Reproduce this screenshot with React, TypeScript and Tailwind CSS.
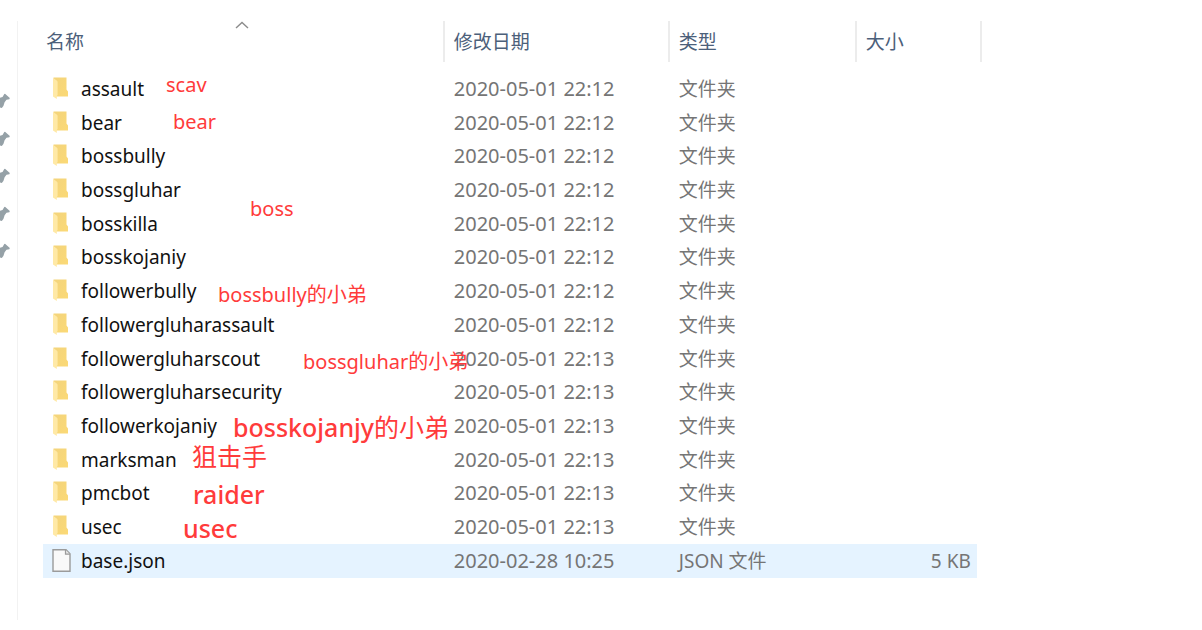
type FileRow = {
  name: string;
  modified: string;
  kind: "folder" | "file";
  size?: string;
};

type Note = {
  latin?: string;
  cjk?: string;
  className: string;
};

const files: FileRow[] = [
  { name: "assault", modified: "2020-05-01 22:12", kind: "folder" },
  { name: "bear", modified: "2020-05-01 22:12", kind: "folder" },
  { name: "bossbully", modified: "2020-05-01 22:12", kind: "folder" },
  { name: "bossgluhar", modified: "2020-05-01 22:12", kind: "folder" },
  { name: "bosskilla", modified: "2020-05-01 22:12", kind: "folder" },
  { name: "bosskojaniy", modified: "2020-05-01 22:12", kind: "folder" },
  { name: "followerbully", modified: "2020-05-01 22:12", kind: "folder" },
  { name: "followergluharassault", modified: "2020-05-01 22:12", kind: "folder" },
  { name: "followergluharscout", modified: "2020-05-01 22:13", kind: "folder" },
  { name: "followergluharsecurity", modified: "2020-05-01 22:13", kind: "folder" },
  { name: "followerkojaniy", modified: "2020-05-01 22:13", kind: "folder" },
  { name: "marksman", modified: "2020-05-01 22:13", kind: "folder" },
  { name: "pmcbot", modified: "2020-05-01 22:13", kind: "folder" },
  { name: "usec", modified: "2020-05-01 22:13", kind: "folder" },
  { name: "base.json", modified: "2020-02-28 10:25", kind: "file", size: "5 KB" },
];

const notes: Note[] = [
  { latin: "scav", className: "left-[123px] top-[52px] text-[20px]" },
  { latin: "bear", className: "left-[130px] top-[89px] text-[20px]" },
  { latin: "boss", className: "left-[207px] top-[176px] text-[20px]" },
  { latin: "bossbully", cjk: "的小弟", className: "left-[175px] top-[262px] text-[20px]" },
  { latin: "bossgluhar", cjk: "的小弟", className: "left-[260px] top-[329px] text-[20px]" },
  { latin: "bosskojanjy", cjk: "的小弟", className: "left-[190px] top-[394px] text-[25px] font-medium" },
  { cjk: "狙击手", className: "left-[149px] top-[423px] text-[25px]" },
  { latin: "raider", className: "left-[150px] top-[461px] text-[25px] font-medium" },
  { latin: "usec", className: "left-[140px] top-[495px] text-[25px] font-medium" },
];

function PinIcon() {
  return (
    <svg width="10" height="16" viewBox="0 0 10 16" className="block">
      <path d="M0 4.8 2.5 4 4.3 1 5 .8 9.8 5 9.4 6.3 6.5 6.8 4.6 9.2 3.4 13 1.8 15 0 14.5Z" fill="#95a1a7" />
    </svg>
  );
}

function FolderIcon() {
  return (
    <svg width="18" height="24" viewBox="0 0 18 24" className="block shrink-0">
      <defs>
        <linearGradient id="folderBack" x1="0" y1="0" x2="1" y2="1">
          <stop offset="0" stopColor="#f3d47c" />
          <stop offset="1" stopColor="#fbd976" />
        </linearGradient>
      </defs>
      <path d="M1.5 .5H14.5V12.5L16 14.5V19.5H3Z" fill="url(#folderBack)" />
      <path d="M1 .7 5 3.7 5.6 4.7V18L4.8 19V22L1 19.5Z" fill="#ffe9a6" />
    </svg>
  );
}

function FileIcon() {
  return (
    <svg width="20" height="24" viewBox="0 0 20 24" className="block shrink-0">
      <path d="M1 .7H14L18 4.9V22.3H1Z" fill="#f9f9f9" stroke="#9b9b9b" strokeWidth="1.4" />
      <path d="M13.5 .7V5.2H18" fill="#e6e6e6" stroke="#9b9b9b" strokeWidth="1.2" />
    </svg>
  );
}

function ColumnHeader({ label, sorted }: { label: string; sorted?: boolean }) {
  return (
    <th scope="col" className="relative h-[41px] border-r-2 border-[#ececec] p-0 text-left font-normal">
      {sorted && (
        <svg width="14" height="8" viewBox="0 0 14 8" className="absolute left-[48%] top-0">
          <path d="M1 7 7 1.5 13 7" fill="none" stroke="#8c8c8c" strokeWidth="1.4" />
        </svg>
      )}
      <button
        type="button"
        className={`block h-[41px] w-full pt-0.5 text-left text-[19px] text-[#4c607a] ${sorted ? "pl-[3px]" : "pl-[9px]"}`}
      >
        {label}
      </button>
    </th>
  );
}

export default function App() {
  return (
    <div className="flex min-h-screen bg-white pt-[21px] pb-[10px] font-['Noto_Sans','Noto_Sans_CJK_SC',sans-serif]">
      <aside className="w-[18px] border-r border-[#f2f2f2] pt-[72px]">
        <ul className="flex h-[166px] flex-col justify-between">
          {[0, 1, 2, 3, 4].map((pin) => (
            <li key={pin}>
              <PinIcon />
            </li>
          ))}
        </ul>
      </aside>

      <main className="flex-1 pl-[25px]">
        <div className="relative">
          <table className="h-[557px] w-[81%] table-fixed border-separate border-spacing-0 whitespace-nowrap">
            <colgroup>
              <col />
              <col className="w-[225px]" />
              <col className="w-[187px]" />
              <col className="w-[125px]" />
            </colgroup>
            <thead>
              <tr>
                <ColumnHeader label="名称" sorted />
                <ColumnHeader label="修改日期" />
                <ColumnHeader label="类型" />
                <ColumnHeader label="大小" />
              </tr>
            </thead>
            <tbody className="text-[20px] leading-6 text-[#757575]">
              <tr aria-hidden="true">
                <td colSpan={4} className="h-[10px] p-0" />
              </tr>
              {files.map(({ name, modified, kind, size }) => (
                <tr key={name} className={kind === "file" ? "[&>td]:bg-[#e5f3ff]" : ""}>
                  <td className="p-0 pl-[9px]">
                    <div className="flex items-center text-[19px] text-[#111111]">
                      <span className="w-[29px]">{kind === "folder" ? <FolderIcon /> : <FileIcon />}</span>
                      {name}
                    </div>
                  </td>
                  <td className="p-0 pl-[9px]">{modified}</td>
                  <td className="p-0 pl-[9px] text-[19px]">{kind === "folder" ? "文件夹" : "JSON 文件"}</td>
                  <td className="border-r-[5px] border-transparent bg-clip-padding p-0 pr-1.5 text-right text-[19px]">
                    {size}
                  </td>
                </tr>
              ))}
            </tbody>
          </table>

          {notes.map(({ latin, cjk, className }) => (
            <span key={className} className={`absolute leading-6 whitespace-nowrap text-[#ff3b3b] ${className}`}>
              {latin}
              {cjk && <span className="font-normal">{cjk}</span>}
            </span>
          ))}
        </div>
      </main>
    </div>
  );
}
